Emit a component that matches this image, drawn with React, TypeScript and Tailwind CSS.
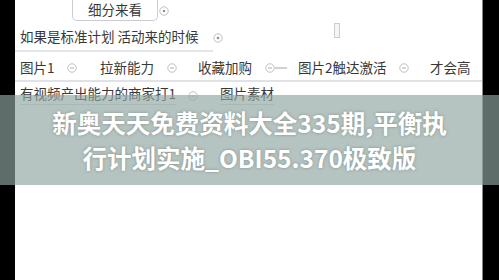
import React from 'react';

const font = { fontFamily: '"Noto Sans CJK SC", "Noto Sans", sans-serif' };

function DotIcon({ minus = false }: { minus?: boolean }) {
  return (
    <svg width="10" height="10" viewBox="0 0 10 10" className="shrink-0">
      <circle cx="5" cy="5" r="4.2" fill="none" stroke="#b4b8c0" strokeWidth="0.9" />
      {minus ? (
        <line x1="3" y1="5" x2="7" y2="5" stroke="#a0a4ac" strokeWidth="0.9" />
      ) : (
        <circle cx="5" cy="5" r="1.3" fill="#8c9098" />
      )}
    </svg>
  );
}

export default function App() {
  return (
    <div className="relative flex h-[280px] w-[499px] overflow-hidden bg-black" style={font}>
      <div className="w-[15px] shrink-0" />
      <div className="relative w-[468px] shrink-0 border-r border-[#8a8a8a] bg-white text-[13.5px] leading-none text-[#383838]">
        <div className="flex h-[24px] items-start">
          <div className="ml-[57px] flex h-[21px] w-[86px] items-center justify-center rounded-b-[5px] border-x border-b border-[#c9ccd2]">
            细分来看
          </div>
          <div className="ml-[1px] mt-[6px]">
            <DotIcon />
          </div>
        </div>
        <div className="flex h-[28px] items-center">
          <div className="flex h-full w-[198px] items-center whitespace-nowrap border-b-2 border-[#e4e6ea] pl-[5px]">
            如果是标准计划 活动来的时候
          </div>
          <div className="ml-[0px]">
            <DotIcon />
          </div>
        </div>
        <div className="absolute left-[319px] top-[23px] h-[15px] w-[6px] border border-[#c8ccd6] bg-[#f4f5f8]" />
        <div className="mt-[4px] flex h-[26px] items-center whitespace-nowrap border-b-2 border-[#dfe2e7] pl-[5px]">
          <span className="w-[34px]">图片1</span>
          <span className="ml-[13px]"><DotIcon minus /></span>
          <span className="ml-[23px] w-[54px]">拉新能力</span>
          <span className="ml-[13px]"><DotIcon minus /></span>
          <span className="ml-[21px] w-[54px]">收藏加购</span>
          <span className="ml-[13px] flex items-center">
            <DotIcon minus />
            <span className="h-[2px] w-[12px] bg-[#cfd2d8]" />
          </span>
          <span className="ml-[11px] w-[87px]">图片2触达激活</span>
          <span className="ml-[14px]"><DotIcon minus /></span>
          <span className="ml-[21px]">才会高</span>
        </div>
        <div className="flex h-[28px] items-center whitespace-nowrap pl-[5px]">
          <span className="w-[156px] border-b border-[#d8dbe0] pb-[3px]">有视频产出能力的商家打1</span>
          <span className="ml-[12px]"><DotIcon minus /></span>
          <span className="ml-[22px] border-b border-[#d8dbe0] pb-[3px]">图片素材</span>
        </div>
        <div className="h-[172px]" />
      </div>
      <div className="flex-1" />
      <div className="absolute left-0 top-[95px] flex h-[90px] w-[499px] flex-col items-center justify-center whitespace-nowrap bg-[rgba(143,166,160,0.66)] text-[24.5px] font-bold leading-[35px] text-white [text-shadow:0_0_3px_rgba(80,90,88,0.5)]">
        <div>新奥天天免费资料大全335期,平衡执</div>
        <div>行计划实施_OBI55.370极致版</div>
      </div>
    </div>
  );
}
